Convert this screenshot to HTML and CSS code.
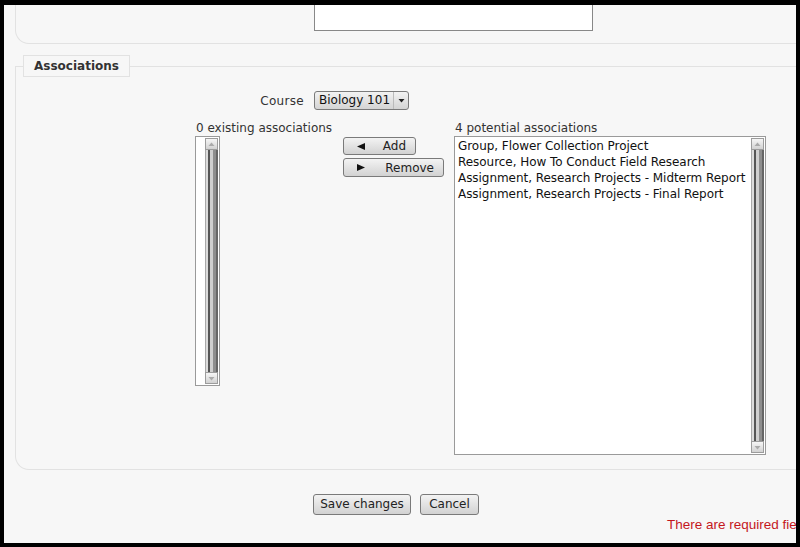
FILE: index.html
```html
<!DOCTYPE html>
<html>
<head>
<meta charset="utf-8">
<link rel="stylesheet" href="styles.css">
</head>
<body>
<div class="screen">
  <div class="prev-fieldset">
    <div class="textarea"></div>
  </div>

  <fieldset class="fieldset">
    <legend class="legend">Associations</legend>

    <div class="course-row">
      <label class="course-label">Course</label>
      <div class="select">
        <span class="select-text">Biology 101</span>
        <span class="select-arrow">
          <svg width="7" height="5" viewBox="0 0 7 5"><path d="M0.5 1 L6.5 1 L3.5 4.5 Z" fill="#222"/></svg>
        </span>
      </div>
    </div>

    <div class="assoc-row">
      <div class="col-existing">
        <div class="col-label">0 existing associations</div>
        <div class="listbox listbox-existing">
          <div class="list-items"></div>
          <div class="sb">
            <div class="sb-btn"><svg width="7" height="5" viewBox="0 0 7 5"><path d="M0.5 4 L6.5 4 L3.5 0.5 Z" fill="#aaa"/></svg></div>
            <div class="sb-track"></div>
            <div class="sb-btn"><svg width="7" height="5" viewBox="0 0 7 5"><path d="M0.5 1 L6.5 1 L3.5 4.5 Z" fill="#aaa"/></svg></div>
          </div>
        </div>
      </div>

      <div class="col-buttons">
        <button class="btn btn-move btn-add">
          <svg width="8" height="7" viewBox="0 0 8 7"><path d="M0 3.5 L8 0 L8 7 Z" fill="#111"/></svg>
          <span>Add</span>
        </button>
        <button class="btn btn-move btn-remove">
          <svg width="8" height="7" viewBox="0 0 8 7"><path d="M8 3.5 L0 0 L0 7 Z" fill="#111"/></svg>
          <span>Remove</span>
        </button>
      </div>

      <div class="col-potential">
        <div class="col-label">4 potential associations</div>
        <div class="listbox listbox-potential">
          <div class="list-items">
            <div class="option">Group, Flower Collection Project</div>
            <div class="option">Resource, How To Conduct Field Research</div>
            <div class="option">Assignment, Research Projects - Midterm Report</div>
            <div class="option">Assignment, Research Projects - Final Report</div>
          </div>
          <div class="sb">
            <div class="sb-btn"><svg width="7" height="5" viewBox="0 0 7 5"><path d="M0.5 4 L6.5 4 L3.5 0.5 Z" fill="#aaa"/></svg></div>
            <div class="sb-track"></div>
            <div class="sb-btn"><svg width="7" height="5" viewBox="0 0 7 5"><path d="M0.5 1 L6.5 1 L3.5 4.5 Z" fill="#aaa"/></svg></div>
          </div>
        </div>
      </div>
    </div>
  </fieldset>

  <div class="actions">
    <button class="btn btn-action btn-save">Save changes</button>
    <button class="btn btn-action btn-cancel">Cancel</button>
  </div>

  <div class="required">There are required fields in this form marked</div>
</div>
</body>
</html>
```

FILE: styles.css
```css
html, body {
  margin: 0;
  padding: 0;
  background: #000;
}

.screen {
  margin: 5px 4px 4px 4px;
  width: 792px;
  height: 538px;
  background: #f7f7f7;
  overflow: hidden;
  font-family: "DejaVu Sans", sans-serif;
  font-size: 12px;
  color: #333;
}

.prev-fieldset {
  margin-top: -30px;
  margin-left: 11px;
  height: 69px;
  border: 1px solid #e2e2e2;
  border-top: 0;
  border-right: 0;
  border-bottom-left-radius: 14px;
  box-sizing: border-box;
  padding-top: 24px;
}

.textarea {
  margin-left: 298px;
  width: 279px;
  height: 32px;
  box-sizing: border-box;
  background: #fff;
  border: 1px solid #888;
}

.fieldset {
  margin: 11px 0 0 11px;
  padding: 0 0 14px 0;
  border: 1px solid #e2e2e2;
  border-right: 0;
  border-bottom-left-radius: 14px;
  min-width: 0;
}

.legend {
  margin-left: 7px;
  padding: 3px 10px 2px 10px;
  border: 1px solid #e2e2e2;
  background: #f7f7f7;
  font-weight: bold;
  font-size: 12px;
  line-height: 15px;
  color: #333;
}

.course-row {
  display: flex;
  align-items: center;
  gap: 10px;
  margin-top: 14px;
}

.course-label {
  width: 288px;
  text-align: right;
  color: #333;
  line-height: 16px;
  letter-spacing: 0.3px;
}

.select {
  width: 95px;
  height: 19px;
  box-sizing: border-box;
  display: flex;
  align-items: stretch;
  border: 1px solid #7a7a7a;
  border-radius: 3px;
  background: linear-gradient(#f2f2f2, #d4d4d4);
  color: #111;
}

.select-text {
  flex: 1;
  padding-left: 4px;
  line-height: 17px;
}

.select-arrow {
  width: 14px;
  border-left: 1px solid #bbb;
  display: flex;
  align-items: center;
  justify-content: center;
}

.assoc-row {
  display: flex;
  margin-top: 10px;
  padding-left: 179px;
}

.col-label {
  line-height: 16px;
  padding-left: 1px;
  color: #333;
}

.col-existing {
  width: 148px;
}

.col-buttons {
  width: 111px;
  padding-top: 17px;
  display: flex;
  flex-direction: column;
  align-items: flex-start;
  gap: 3px;
}

.col-potential {
  width: 311px;
}

.listbox {
  display: flex;
  box-sizing: border-box;
  background: #fff;
  border: 1px solid #9a9a9a;
  padding: 1px;
}

.listbox-existing {
  width: 25px;
  height: 250px;
}

.listbox-potential {
  width: 312px;
  height: 319px;
}

.list-items {
  flex: 1;
  padding-left: 2px;
}

.option {
  line-height: 16px;
  color: #111;
  white-space: nowrap;
  letter-spacing: -0.05px;
}

.sb {
  width: 13px;
  display: flex;
  flex-direction: column;
}

.sb-btn {
  height: 12px;
  box-sizing: border-box;
  border: 1px solid #9c9c9c;
  background: linear-gradient(#f6f6f6, #d2d2d2);
  display: flex;
  align-items: center;
  justify-content: center;
}

.sb-track {
  flex: 1;
  background: linear-gradient(to right,
    #a8a8a8 0, #a8a8a8 1px,
    #dcdcdc 1px, #dcdcdc 3px,
    #555 3px, #555 5px,
    #cfcfcf 5px, #cfcfcf 8px,
    #8e8e8e 8px, #8e8e8e 11px,
    #666 11px, #666 13px);
}

.btn {
  font-family: "DejaVu Sans", sans-serif;
  font-size: 12px;
  color: #222;
  border: 1px solid #7a7a7a;
  border-radius: 3px;
  background: linear-gradient(#f3f3f3, #d2d2d2);
  box-sizing: border-box;
  margin: 0;
  padding: 0;
  cursor: pointer;
}

.btn-move {
  display: flex;
  align-items: center;
  justify-content: space-between;
  padding: 0 9px 0 13px;
  height: 18px;
}

.btn-add {
  width: 73px;
}

.btn-remove {
  width: 101px;
  height: 19px;
}

.actions {
  display: flex;
  gap: 9px;
  margin-top: 24px;
  padding-left: 309px;
}

.btn-action {
  height: 21px;
  line-height: 19px;
}

.btn-save {
  width: 98px;
}

.btn-cancel {
  width: 59px;
}

.required {
  margin-top: 2px;
  padding-left: 663px;
  font-family: "Liberation Sans", Arial, sans-serif;
  font-size: 13.5px;
  line-height: 16px;
  color: #c4161c;
  white-space: nowrap;
}
```
